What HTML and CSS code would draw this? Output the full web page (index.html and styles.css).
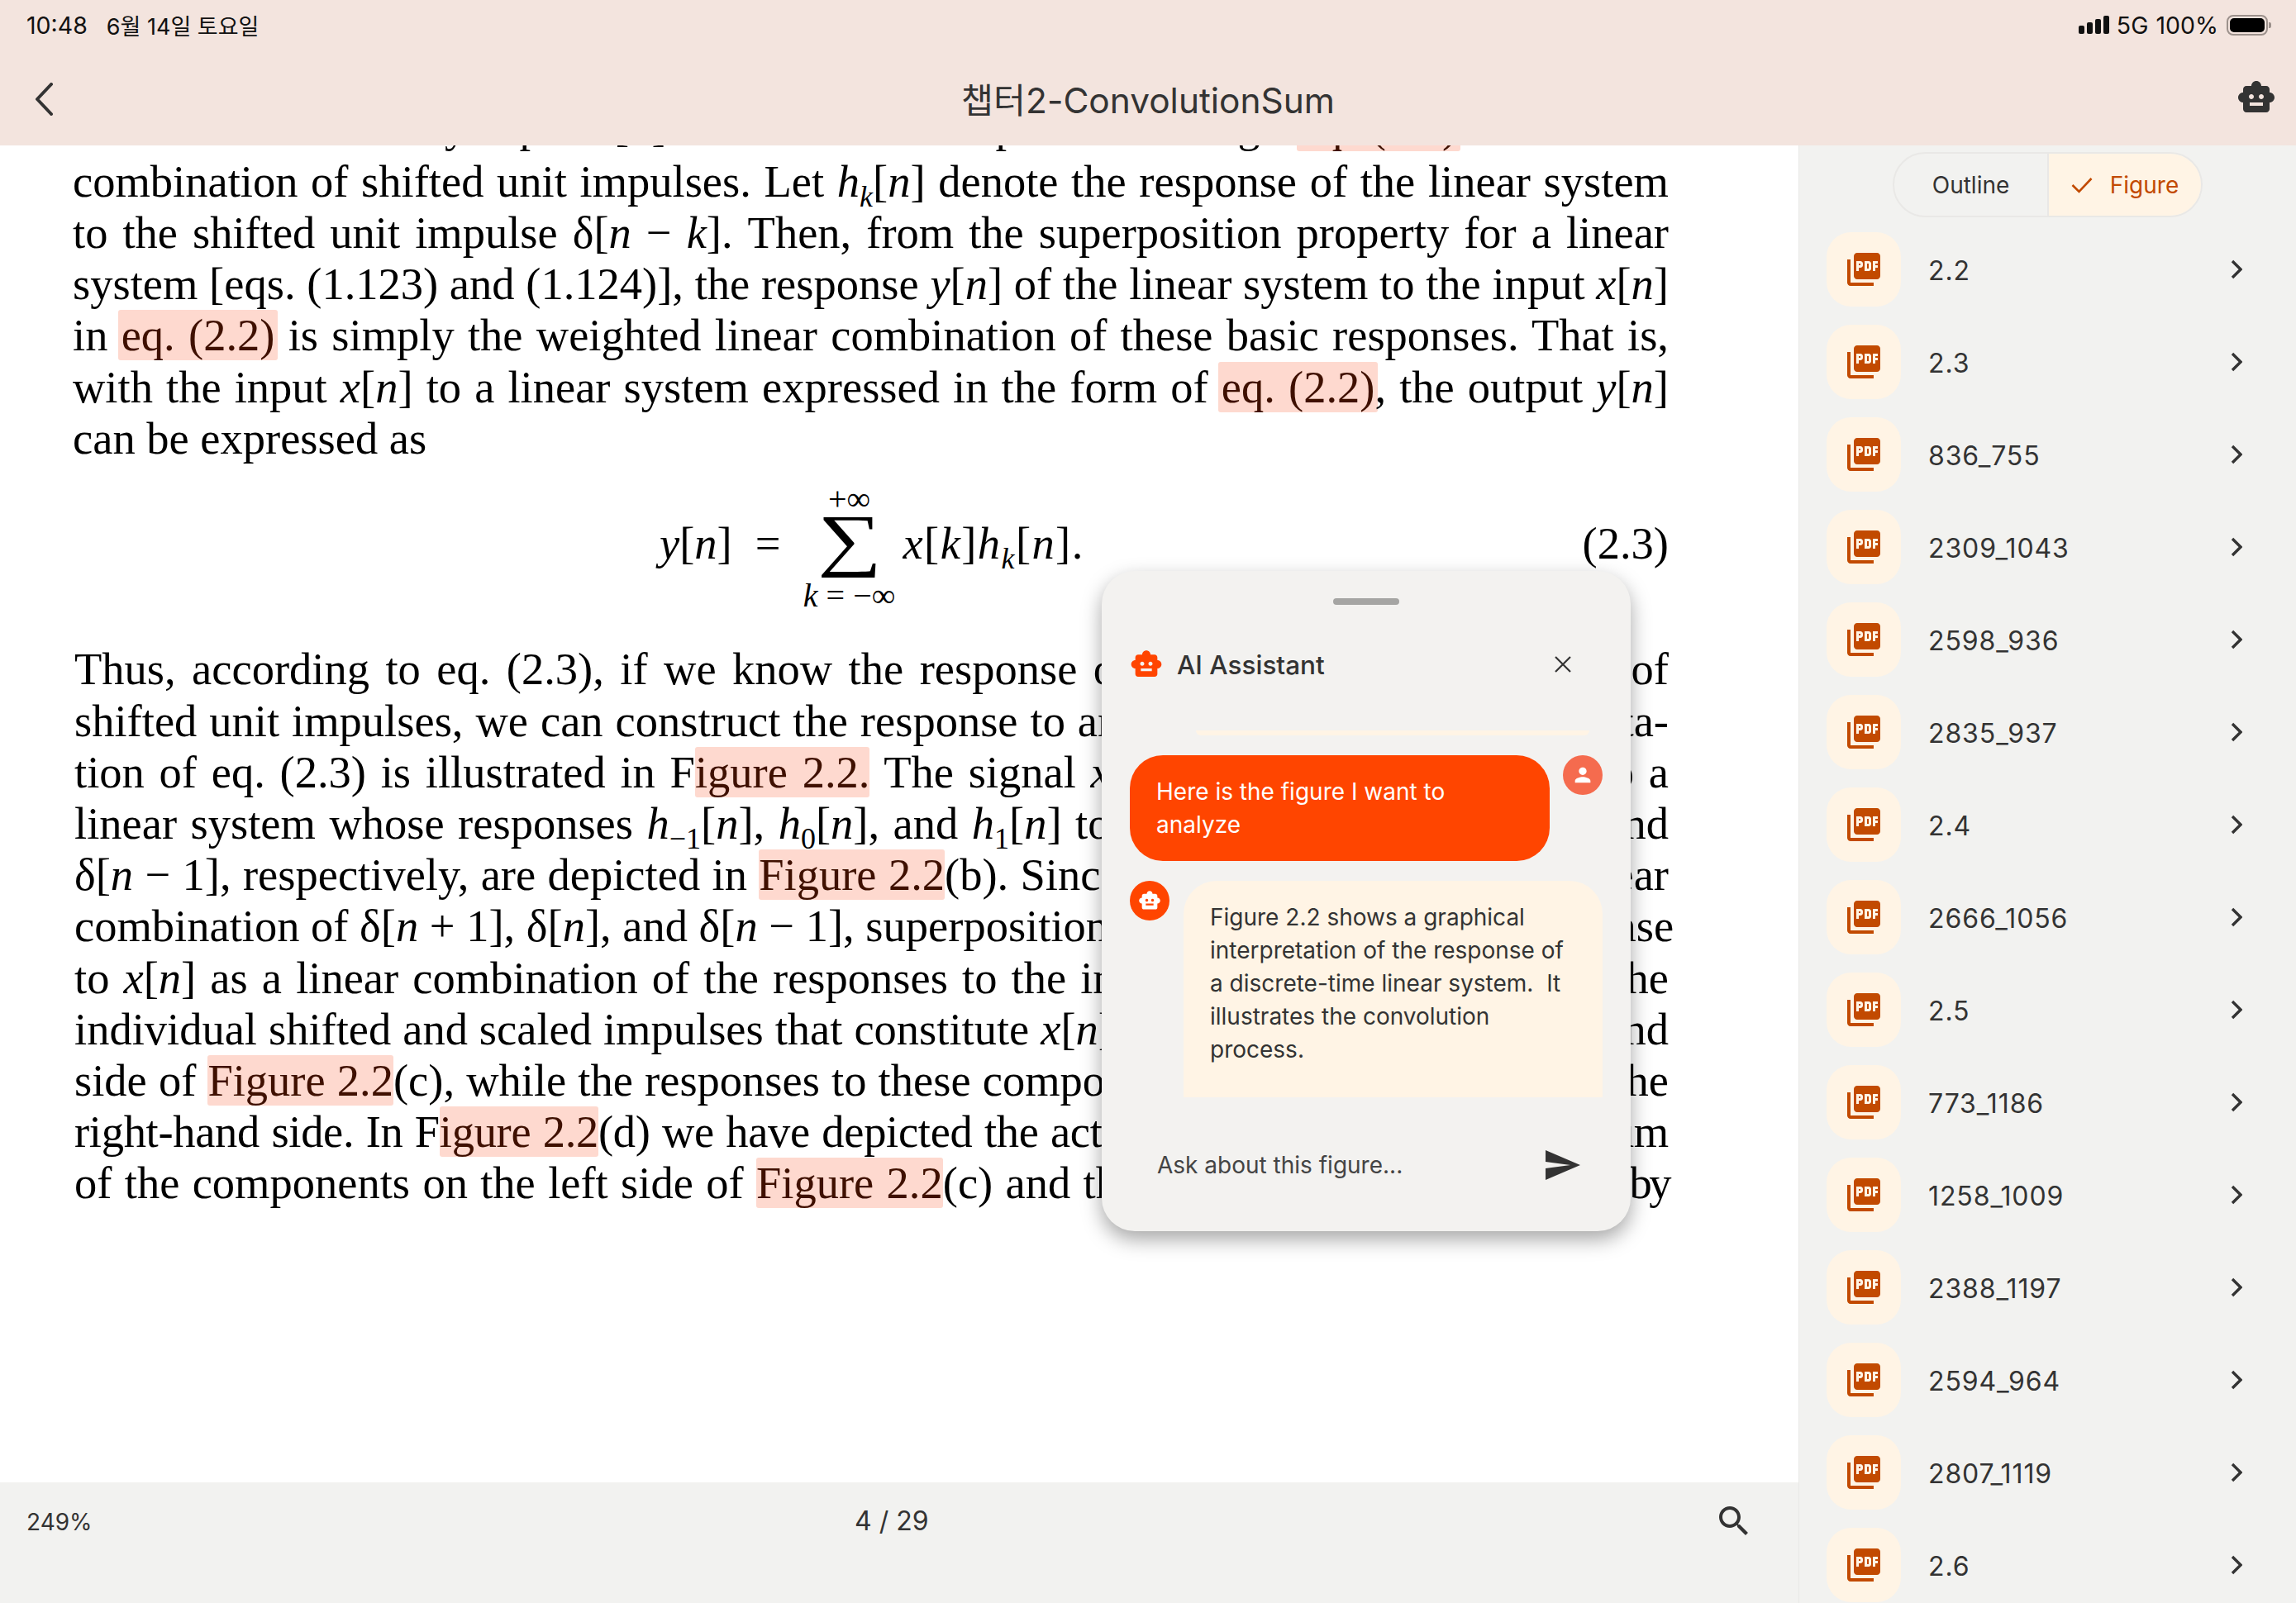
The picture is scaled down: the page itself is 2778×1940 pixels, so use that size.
FILE: index.html
```html
<!DOCTYPE html>
<html lang="ko">
<head>
    <meta charset="UTF-8">
    <meta name="viewport" content="width=device-width, initial-scale=1.0">
    <title>챕터2-ConvolutionSum</title>
    <link rel="stylesheet" href="styles.css">
</head>
<body>
    <svg class="defs" width="0" height="0">
        <symbol id="pdf" viewBox="0 0 24 24"><path d="M20 2H8c-1.1 0-2 .9-2 2v12c0 1.1.9 2 2 2h12c1.1 0 2-.9 2-2V4c0-1.1-.9-2-2-2zm-8.5 7.5c0 .83-.67 1.5-1.5 1.5H9v2H7.5V7H10c.83 0 1.5.67 1.5 1.5v1zm5 2c0 .83-.67 1.5-1.5 1.5h-2.5V7H15c.83 0 1.5.67 1.5 1.5v3zm4-3H19v1h1.5V11H19v2h-1.5V7h3v1.5zM9 9.5h1v-1H9v1zM4 6H2v14c0 1.1.9 2 2 2h14v-2H4V6zm10 5.5h1v-3h-1v3z"/></symbol>
        <symbol id="robot" viewBox="0 0 24 24"><path d="M20 9V7c0-1.1-.9-2-2-2h-3c0-1.66-1.34-3-3-3S9 3.34 9 5H6c-1.1 0-2 .9-2 2v2c-1.66 0-3 1.34-3 3s1.34 3 3 3v4c0 1.1.9 2 2 2h12c1.1 0 2-.9 2-2v-4c1.66 0 3-1.34 3-3s-1.34-3-3-3zM7.5 11.5c0-.83.67-1.5 1.5-1.5s1.5.67 1.5 1.5S9.83 13 9 13s-1.5-.67-1.5-1.5zM16 17H8v-2h8v2zm-1-4c-.83 0-1.5-.67-1.5-1.5S14.17 10 15 10s1.5.67 1.5 1.5S15.83 13 15 13z"/></symbol>
        <symbol id="chevron" viewBox="0 0 14 24"><path d="M2 2l10 10L2 22" fill="none" stroke="currentColor" stroke-width="3.4"/></symbol>
    </svg>

    <div class="app">
        <header class="topbar">
            <div class="status">
                <span class="status-time">10:48</span>
                <span class="status-date">6월 14일 토요일</span>
                <div class="status-right">
                    <div class="signal"><i></i><i></i><i></i><i></i></div>
                    <span>5G</span>
                    <span>100%</span>
                    <div class="battery"><div class="battery-fill"></div></div>
                </div>
            </div>
            <div class="titlebar">
                <svg class="back" width="24" height="40" viewBox="0 0 24 40"><path d="M21 2L4 20l17 18" fill="none" stroke="#333" stroke-width="4" stroke-linecap="round" stroke-linejoin="round"/></svg>
                <h1 class="title">챕터2-ConvolutionSum</h1>
                <svg class="icon-48 bot-button"><use href="#robot"/></svg>
            </div>
        </header>

        <main class="main">
            <section class="reader">
                <div class="doc">
                    <div class="page">
                        <div class="para">
                            <div class="line clipped">Consider an arbitrary input <i>x</i>[<i>n</i>] which we can represent through <mark>eq. (2.2)</mark> as a linear</div>
                            <div class="line">combination of shifted unit impulses. Let <i>h<sub>k</sub></i>[<i>n</i>] denote the response of the linear system</div>
                            <div class="line">to the shifted unit impulse δ[<i>n</i> − <i>k</i>]. Then, from the superposition property for a linear</div>
                            <div class="line">system [eqs. (1.123) and (1.124)], the response <i>y</i>[<i>n</i>] of the linear system to the input <i>x</i>[<i>n</i>]</div>
                            <div class="line">in <mark>eq. (2.2)</mark> is simply the weighted linear combination of these basic responses. That is,</div>
                            <div class="line">with the input <i>x</i>[<i>n</i>] to a linear system expressed in the form of <mark>eq. (2.2)</mark>, the output <i>y</i>[<i>n</i>]</div>
                            <div class="line last">can be expressed as</div>
                        </div>

                        <div class="equation">
                            <span class="eq-lhs"><i>y</i>[<i>n</i>]</span>
                            <span class="eq-sign">=</span>
                            <div class="sum">
                                <span class="sum-limit">+∞</span>
                                <span class="sum-sign">∑</span>
                                <span class="sum-limit"><i>k</i> = −∞</span>
                            </div>
                            <span class="eq-rhs"><i>x</i>[<i>k</i>]<i>h<sub>k</sub></i>[<i>n</i>].</span>
                            <span class="eq-number">(2.3)</span>
                        </div>

                        <div class="para second">
                            <div class="line">Thus, according to eq. (2.3), if we know the response of a linear system to the set of</div>
                            <div class="line">shifted unit impulses, we can construct the response to an arbitrary input. An interpreta-</div>
                            <div class="line">tion of eq. (2.3) is illustrated in F<mark class="fig">igure 2.2.</mark> The signal <i>x</i>[<i>n</i>] is applied as the input to a</div>
                            <div class="line">linear system whose responses <i>h</i><sub>−1</sub>[<i>n</i>], <i>h</i><sub>0</sub>[<i>n</i>], and <i>h</i><sub>1</sub>[<i>n</i>] to the signals δ[<i>n</i> + 1], δ[<i>n</i>], and</div>
                            <div class="line">δ[<i>n</i> − 1], respectively, are depicted in <mark class="fig">Figure 2.2</mark>(b). Since <i>x</i>[<i>n</i>] can be written as a linear</div>
                            <div class="line">combination of δ[<i>n</i> + 1], δ[<i>n</i>], and δ[<i>n</i> − 1], superposition allows us to write the response</div>
                            <div class="line">to <i>x</i>[<i>n</i>] as a linear combination of the responses to the individual shifted impulses. The</div>
                            <div class="line">individual shifted and scaled impulses that constitute <i>x</i>[<i>n</i>] are illustrated on the left-hand</div>
                            <div class="line">side of <mark class="fig">Figure 2.2</mark>(c), while the responses to these component signals are pictured on the</div>
                            <div class="line tight">right-hand side. In F<mark class="fig">igure 2.2</mark>(d) we have depicted the actual input <i>x</i>[<i>n</i>], which is the sum</div>
                            <div class="line">of the components on the left side of <mark class="fig">Figure 2.2</mark>(c) and the actual output <i>y</i>[<i>n</i>], which, <span class="snug">by</span></div>
                        </div>
                    </div>
                </div>

                <div class="reader-bar">
                    <span class="zoom-level">249%</span>
                    <span class="page-count">4 / 29</span>
                    <svg class="search" width="48" height="48" viewBox="0 0 24 24"><path d="M15.5 14h-.79l-.28-.27C15.41 12.59 16 11.11 16 9.5 16 5.91 13.09 3 9.5 3S3 5.91 3 9.5 5.91 16 9.5 16c1.61 0 3.09-.59 4.23-1.57l.27.28v.79l5 4.99L20.49 19l-4.99-5zm-6 0C7.01 14 5 11.99 5 9.5S7.01 5 9.5 5 14 7.01 14 9.5 11.99 14 9.5 14z"/></svg>
                </div>
            </section>

            <aside class="sidebar">
                <div class="segments">
                    <div class="segment">Outline</div>
                    <div class="segment active">
                        <svg width="26" height="20" viewBox="0 0 26 20"><path d="M1.5 10l8 8L24.500 2" fill="none" stroke="currentColor" stroke-width="2.6"/></svg>
                        Figure
                    </div>
                </div>
                <ul class="figure-list">
                    <li class="figure-item"><div class="pdf-box"><svg class="icon-48"><use href="#pdf"/></svg></div><span class="figure-name">2.2</span><svg class="chev"><use href="#chevron"/></svg></li>
                    <li class="figure-item"><div class="pdf-box"><svg class="icon-48"><use href="#pdf"/></svg></div><span class="figure-name">2.3</span><svg class="chev"><use href="#chevron"/></svg></li>
                    <li class="figure-item"><div class="pdf-box"><svg class="icon-48"><use href="#pdf"/></svg></div><span class="figure-name">836_755</span><svg class="chev"><use href="#chevron"/></svg></li>
                    <li class="figure-item"><div class="pdf-box"><svg class="icon-48"><use href="#pdf"/></svg></div><span class="figure-name">2309_1043</span><svg class="chev"><use href="#chevron"/></svg></li>
                    <li class="figure-item"><div class="pdf-box"><svg class="icon-48"><use href="#pdf"/></svg></div><span class="figure-name">2598_936</span><svg class="chev"><use href="#chevron"/></svg></li>
                    <li class="figure-item"><div class="pdf-box"><svg class="icon-48"><use href="#pdf"/></svg></div><span class="figure-name">2835_937</span><svg class="chev"><use href="#chevron"/></svg></li>
                    <li class="figure-item"><div class="pdf-box"><svg class="icon-48"><use href="#pdf"/></svg></div><span class="figure-name">2.4</span><svg class="chev"><use href="#chevron"/></svg></li>
                    <li class="figure-item"><div class="pdf-box"><svg class="icon-48"><use href="#pdf"/></svg></div><span class="figure-name">2666_1056</span><svg class="chev"><use href="#chevron"/></svg></li>
                    <li class="figure-item"><div class="pdf-box"><svg class="icon-48"><use href="#pdf"/></svg></div><span class="figure-name">2.5</span><svg class="chev"><use href="#chevron"/></svg></li>
                    <li class="figure-item"><div class="pdf-box"><svg class="icon-48"><use href="#pdf"/></svg></div><span class="figure-name">773_1186</span><svg class="chev"><use href="#chevron"/></svg></li>
                    <li class="figure-item"><div class="pdf-box"><svg class="icon-48"><use href="#pdf"/></svg></div><span class="figure-name">1258_1009</span><svg class="chev"><use href="#chevron"/></svg></li>
                    <li class="figure-item"><div class="pdf-box"><svg class="icon-48"><use href="#pdf"/></svg></div><span class="figure-name">2388_1197</span><svg class="chev"><use href="#chevron"/></svg></li>
                    <li class="figure-item"><div class="pdf-box"><svg class="icon-48"><use href="#pdf"/></svg></div><span class="figure-name">2594_964</span><svg class="chev"><use href="#chevron"/></svg></li>
                    <li class="figure-item"><div class="pdf-box"><svg class="icon-48"><use href="#pdf"/></svg></div><span class="figure-name">2807_1119</span><svg class="chev"><use href="#chevron"/></svg></li>
                    <li class="figure-item"><div class="pdf-box"><svg class="icon-48"><use href="#pdf"/></svg></div><span class="figure-name">2.6</span><svg class="chev"><use href="#chevron"/></svg></li>
                </ul>
            </aside>

            <div class="assistant">
                <div class="handle"></div>
                <div class="assistant-head">
                    <svg class="assistant-logo"><use href="#robot"/></svg>
                    <span class="assistant-title">AI Assistant</span>
                    <svg class="close" width="24" height="24" viewBox="0 0 24 24"><path d="M3 3l18 18M21 3L3 21" fill="none" stroke="#333" stroke-width="2.2"/></svg>
                </div>
                <div class="messages">
                    <div class="old-reply"></div>
                    <div class="msg user">
                        <div class="bubble user-bubble">Here is the figure I want to analyze</div>
                        <div class="avatar user-avatar">
                            <svg width="28" height="28" viewBox="0 0 24 24"><path d="M12 12c2.210 0 4-1.790 4-4s-1.790-4-4-4-4 1.790-4 4 1.790 4 4 4zm0 2c-2.670 0-8 1.340-8 4v2h16v-2c0-2.660-5.330-4-8-4z"/></svg>
                        </div>
                    </div>
                    <div class="msg bot">
                        <div class="avatar bot-avatar"><svg width="28" height="28"><use href="#robot"/></svg></div>
                        <div class="bubble bot-bubble">Figure 2.2 shows a graphical interpretation of the response of a discrete-time linear system.&nbsp; It illustrates the convolution process.</div>
                    </div>
                </div>
                <div class="ask">
                    <span class="ask-hint">Ask about this figure...</span>
                    <svg width="48" height="48" viewBox="0 0 24 24"><path d="M2.010 21L23 12 2.010 3 2 10l15 2-15 2z" fill="#333"/></svg>
                </div>
            </div>
        </main>
    </div>
</body>
</html>
```

FILE: styles.css
```css
* {
    box-sizing: border-box;
}
body {
    margin: 0;
    font-family: Inter, "Noto Sans CJK KR", sans-serif;
    color: #333;
    background-color: #fff;
}
.defs {
    position: absolute;
}
.app {
    width: 2778px;
    height: 1940px;
    display: flex;
    flex-direction: column;
    overflow: hidden;
}

/* top bars */
.topbar {
    height: 176px;
    flex: none;
    background-color: #f3e4de;
    padding: 0 24px 0 32px;
}
.status {
    height: 60px;
    display: flex;
    align-items: center;
    font-size: 28.500px;
    color: #111;
}
.status-date {
    margin-left: 23px;
    font-size: 27px;
}
.status-right {
    margin-left: auto;
    display: flex;
    align-items: center;
    gap: 9px;
    padding-right: 10px;
}
.signal {
    display: flex;
    align-items: flex-end;
    gap: 3px;
    height: 22px;
}
.signal i {
    width: 7px;
    background: #111;
    border-radius: 2px;
}
.signal i:nth-child(1) { height: 10px; }
.signal i:nth-child(2) { height: 14px; }
.signal i:nth-child(3) { height: 18px; }
.signal i:nth-child(4) { height: 22px; }
.battery {
    width: 50px;
    height: 25px;
    border: 2px solid #9c918c;
    border-radius: 8px;
    padding: 2px;
    margin-left: 1px;
    position: relative;
}
.battery::after {
    content: "";
    position: absolute;
    right: -6px;
    top: 7px;
    width: 3px;
    height: 7px;
    background: #9c918c;
    border-radius: 0 2px 2px 0;
}
.battery-fill {
    height: 100%;
    background: #000;
    border-radius: 5px;
}
.titlebar {
    height: 116px;
    display: grid;
    grid-template-columns: 1fr auto 1fr;
    align-items: center;
    margin-left: -8px;
}
.back {
    margin: 4px 0 0 17px;
}
.title {
    margin: 0;
    font-size: 42.400px;
    font-weight: 400;
    color: #333;
}
.icon-48 {
    width: 48px;
    height: 48px;
    fill: currentColor;
}
.bot-button {
    justify-self: end;
}

/* layout */
.main {
    flex: 1;
    min-height: 0;
    display: flex;
    position: relative;
}
.reader {
    flex: 1;
    min-width: 0;
    display: flex;
    flex-direction: column;
}
.doc {
    flex: 1;
    min-height: 0;
    overflow: hidden;
    background-color: #fff;
}

/* pdf page */
.page {
    margin-top: -54px;
    padding: 0 157px 0 88px;
    font-family: "Liberation Serif", "DejaVu Serif", serif;
    font-size: 54.500px;
    line-height: 62.200px;
    color: #000;
}
.line {
    white-space: nowrap;
    text-align: justify;
    text-align-last: justify;
}
.line.clipped {
    margin-bottom: 4.500px;
}
.line.last {
    text-align-last: left;
}
.line.tight {
    letter-spacing: -0.3px;
}
.snug {
    letter-spacing: -3.500px;
}
.para.second {
    padding-left: 2px;
}
.page sub {
    font-size: 36px;
    line-height: 0;
}
mark {
    background-color: #fed9cf;
    color: #3f1000;
    border-radius: 3px;
    padding: 0 4px;
    margin: 0 -4px;
}
mark.fig {
    padding: 0;
    margin: 0;
}
.equation {
    height: 217.500px;
    display: flex;
    align-items: center;
    padding-left: 710px;
    padding-bottom: 26px;
}
.eq-sign {
    margin-left: 28px;
}
.sum {
    display: flex;
    flex-direction: column;
    align-items: center;
    margin: 9px 0 0 28px;
    width: 110px;
}
.sum-limit {
    font-size: 40px;
    line-height: 40px;
    white-space: nowrap;
}
.sum-sign {
    font-size: 84px;
    line-height: 57px;
    margin-bottom: 20px;
    transform: scaleX(1.3);
}
.eq-rhs {
    margin-left: 10px;
    letter-spacing: 1.4px;
}
.eq-number {
    margin-left: auto;
}

/* bottom bar of the reader */
.reader-bar {
    height: 146px;
    flex: none;
    background-color: #f2f2f0;
    display: flex;
    align-items: flex-start;
    padding: 28px 54px 0 32px;
    position: relative;
    font-size: 28px;
}
.zoom-level {
    line-height: 40px;
}
.page-count {
    position: absolute;
    left: 1034px;
    top: 27px;
    line-height: 40px;
    font-size: 32px;
}
.search {
    margin-left: auto;
    fill: #333;
    margin-top: -5px;
}

/* sidebar */
.sidebar {
    width: 602px;
    flex: none;
    background-color: #f2f2f0;
    border-left: 1px solid #e9e9e7;
    padding: 8px 0 0 33px;
    overflow: hidden;
}
.segments {
    width: 375px;
    height: 79px;
    margin-left: 80px;
    display: flex;
    border: 2px solid #e9e8e6;
    border-radius: 40px;
    overflow: hidden;
    font-size: 28px;
}
.segment {
    flex: 1;
    display: flex;
    align-items: center;
    justify-content: center;
    gap: 21px;
    padding-top: 1px;
}
.segment.active {
    flex: none;
    width: 186px;
    background-color: #fff4e5;
    border-left: 2px solid #e9e8e6;
    color: #c24a00;
}
.figure-list {
    list-style: none;
    margin: 18px 0 0;
    padding: 0;
}
.figure-item {
    height: 112px;
    display: flex;
    align-items: flex-start;
}
.pdf-box {
    width: 90px;
    height: 90px;
    border-radius: 30px;
    background-color: #fff4e5;
    color: #c24a00;
    display: flex;
    align-items: center;
    justify-content: center;
}
.figure-name {
    margin-left: 33px;
    font-size: 32px;
    line-height: 93px;
    letter-spacing: 0.9px;
}
.chev {
    width: 14px;
    height: 24px;
    margin: 33px 65px 0 auto;
    color: #333;
}

/* assistant panel */
.assistant {
    position: absolute;
    left: 1333px;
    top: 515px;
    width: 640px;
    height: 799px;
    background-color: #f3f2f0;
    border-radius: 40px;
    box-shadow: 0 10px 24px rgba(0, 0, 0, 0.35);
    padding: 33px 34px 0;
    display: flex;
    flex-direction: column;
}
.handle {
    width: 80px;
    height: 8px;
    border-radius: 4px;
    background-color: #a5a5a3;
    margin: 0 auto;
    flex: none;
}
.assistant-head {
    height: 40px;
    margin-top: 52px;
    display: flex;
    align-items: center;
    flex: none;
}
.assistant-logo {
    width: 40px;
    height: 40px;
    fill: #ff4500;
}
.assistant-title {
    margin-left: 17px;
    font-size: 31.500px;
    font-weight: 500;
}
.close {
    margin-left: auto;
    margin-right: 36px;
}
.messages {
    height: 444px;
    margin-top: 60px;
    overflow: hidden;
    flex: none;
    font-size: 28px;
    line-height: 40px;
}
.old-reply {
    width: 476px;
    height: 6px;
    margin-left: 80px;
    background-color: #fff4e5;
    border-radius: 0 0 24px 24px;
}
.msg {
    display: flex;
    justify-content: space-between;
    margin-top: 24px;
}
.avatar {
    width: 48px;
    height: 48px;
    border-radius: 50%;
    display: flex;
    align-items: center;
    justify-content: center;
    fill: #fff;
    flex: none;
}
.user-avatar {
    background-color: #f56b4e;
}
.bot-avatar {
    background-color: #ff4500;
}
.bubble {
    border-radius: 40px;
}
.user-bubble {
    width: 508px;
    height: 128px;
    padding: 24px 32px;
    background-color: #ff4500;
    color: #fff;
}
.bot-bubble {
    width: 507px;
    padding: 24px 32px 80px;
    background-color: #fff4e5;
}
.ask {
    display: flex;
    align-items: center;
    justify-content: space-between;
    padding: 0 25px 0 33px;
    margin-top: 58px;
    font-size: 28px;
    color: #444;
}
```
